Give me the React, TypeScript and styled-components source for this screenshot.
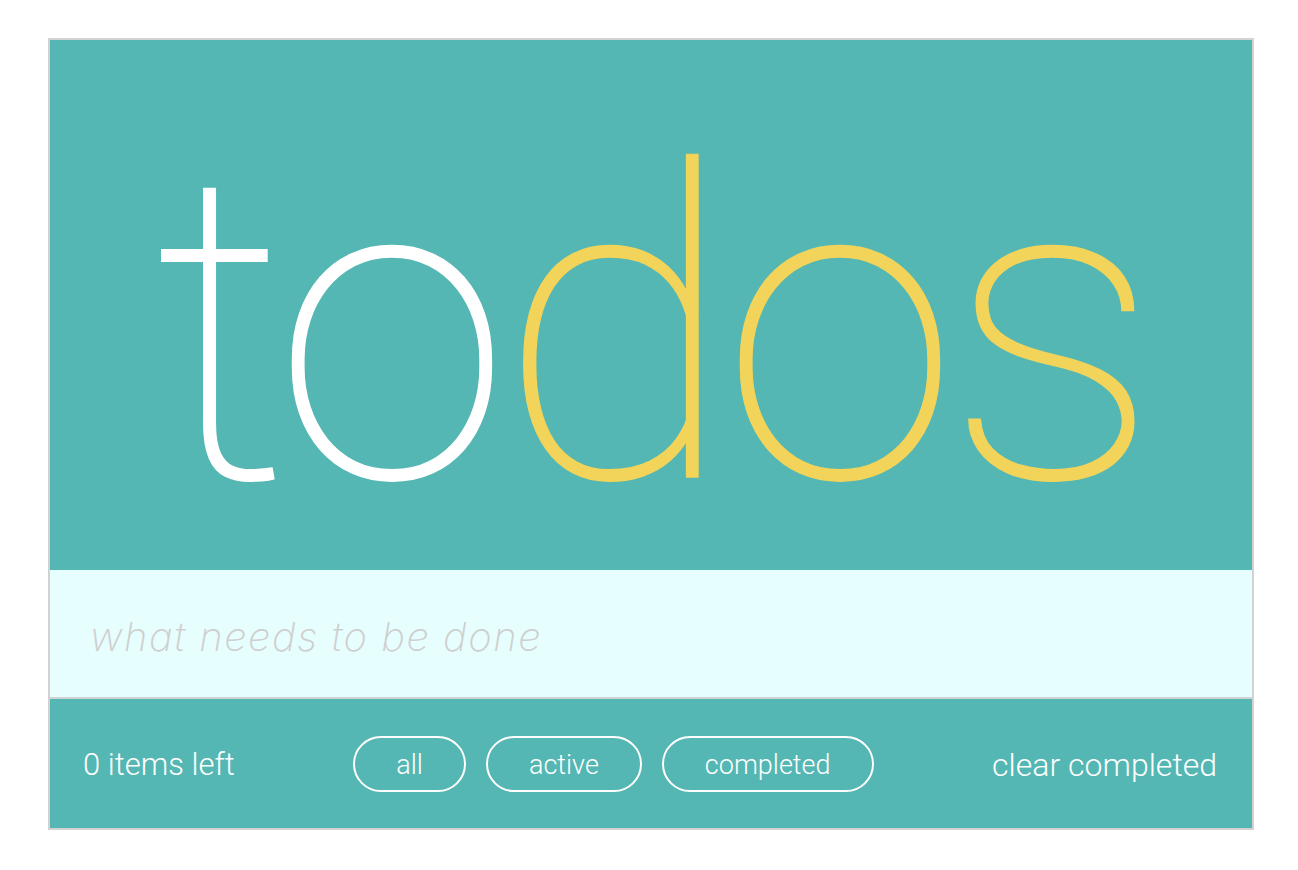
import React from "react";
import styled, { createGlobalStyle } from "styled-components";

const GlobalStyle = createGlobalStyle`
  html, body { margin: 0; padding: 0; background: #ffffff; }
  body { font-family: "Roboto", "Inter", "Liberation Sans", sans-serif; }
  * { box-sizing: border-box; }
`;

const Page = styled.div`
  padding: 38px 0 40px 48px;
`;

const Card = styled.section`
  width: 1206px;
  border: 2px solid #d2d2d2;
  display: flex;
  flex-direction: column;
`;

const Header = styled.header`
  height: 530px;
  background: #54b7b3;
  display: flex;
  justify-content: center;
  align-items: flex-start;
  padding-top: 75px;
`;

const Title = styled.h1`
  margin: 0;
  font-family: "Roboto", "Inter", sans-serif;
  font-weight: 100;
  font-size: 430px;
  line-height: 1;
  letter-spacing: -12px;
  -webkit-text-stroke: 1.5px currentColor;
`;

const Part = styled.span<{ $tone: string }>`
  color: ${(p) => p.$tone};
`;

const InputRow = styled.div`
  height: 129px;
  background: #e6fefd;
  border-bottom: 2px solid #d2d2d2;
  display: flex;
  align-items: center;
  padding: 0 40px;
`;

const TodoInput = styled.input`
  width: 100%;
  border: none;
  outline: none;
  background: transparent;
  font-family: "Inter", "Roboto", sans-serif;
  font-style: italic;
  font-weight: 200;
  font-size: 40px;
  letter-spacing: 1.5px;
  color: #555;
  padding: 0;
  margin-top: 5px;
  &::placeholder {
    color: #cfcfcf;
    opacity: 1;
  }
`;

const Footer = styled.footer`
  height: 129px;
  background: #54b7b3;
  display: flex;
  align-items: center;
  justify-content: space-between;
  padding: 0 35px 0 33px;
  color: #ffffff;
  font-family: "Roboto", "Inter", sans-serif;
  font-weight: 300;
`;

const Count = styled.span`
  font-size: 31px;
  margin-top: 2px;
`;

const Filters = styled.div`
  display: flex;
  gap: 20px;
`;

const FilterButton = styled.button`
  height: 56px;
  padding: 3px 41px 0;
  border: 2px solid #ffffff;
  border-radius: 28px;
  background: transparent;
  color: #ffffff;
  font-family: "Roboto", "Inter", sans-serif;
  font-weight: 300;
  font-size: 27px;
  line-height: 1;
  cursor: pointer;
`;

const ClearButton = styled.button`
  border: none;
  background: transparent;
  padding: 0;
  color: #ffffff;
  font-family: "Roboto", "Inter", sans-serif;
  font-weight: 300;
  font-size: 32px;
  cursor: pointer;
  margin-top: 2px;
`;

export default function App() {
  return (
    <>
      <GlobalStyle />
      <Page>
        <Card>
          <Header>
            <Title>
              <Part $tone="#ffffff">to</Part>
              <Part $tone="#f3d45a">dos</Part>
            </Title>
          </Header>
          <InputRow>
            <TodoInput placeholder="what needs to be done" />
          </InputRow>
          <Footer>
            <Count>0 items left</Count>
            <Filters>
              <FilterButton>all</FilterButton>
              <FilterButton>active</FilterButton>
              <FilterButton>completed</FilterButton>
            </Filters>
            <ClearButton>clear completed</ClearButton>
          </Footer>
        </Card>
      </Page>
    </>
  );
}
